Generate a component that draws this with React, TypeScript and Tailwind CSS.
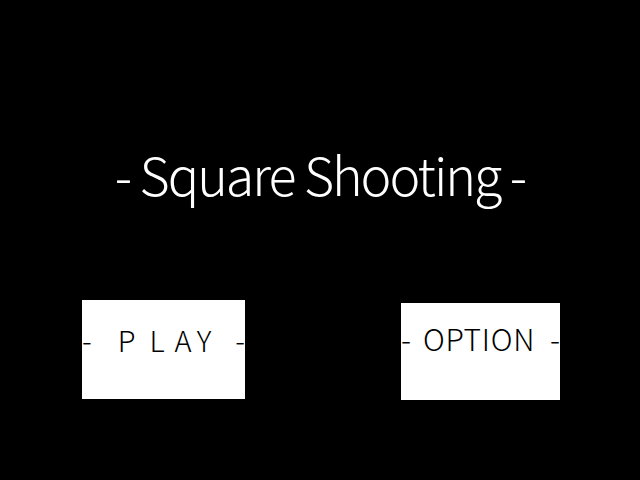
export default function App() {
  return (
    <div className="h-[480px] w-[640px] bg-black font-['Noto_Sans_CJK_JP',sans-serif] font-light">
      <div className="pt-[148px] text-center text-[52px] leading-none tracking-[-2px] whitespace-nowrap text-white">
        - Square Shooting -
      </div>
      <div className="mt-[100px] flex items-start gap-[156px] pl-[82px]">
        <div className="flex h-[99px] w-[163px] bg-white pt-[25px] text-[29px] leading-none whitespace-nowrap text-black">
          <span>-</span>
          <span className="ml-[26px]">P</span>
          <span className="ml-[14px]">L</span>
          <span className="ml-[10px]">A</span>
          <span className="ml-[5px]">Y</span>
          <span className="ml-auto">-</span>
        </div>
        <div className="mt-[3px] flex h-[97px] w-[159px] bg-white pt-[20px] text-[30px] leading-none whitespace-nowrap text-black">
          <span>-</span>
          <span className="ml-[12px] tracking-[0.7px]">OPTION</span>
          <span className="ml-auto">-</span>
        </div>
      </div>
    </div>
  );
}
